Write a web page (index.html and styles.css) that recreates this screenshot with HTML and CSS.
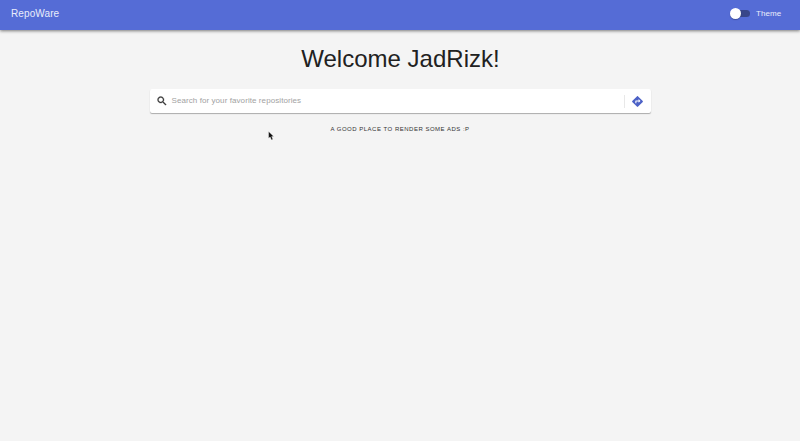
FILE: index.html
```html
<!DOCTYPE html>
<html lang="en">
<head>
<meta charset="utf-8">
<title>RepoWare</title>
<link rel="stylesheet" href="styles.css">
</head>
<body>
<header class="appbar">
  <span class="brand">RepoWare</span>
  <label class="theme"><span class="switch"><span class="thumb"></span></span><span class="theme-label">Theme</span></label>
</header>
<main class="content">
  <h1 class="title">Welcome JadRizk!</h1>
  <form class="search">
    <svg class="search-icon" viewBox="0 0 24 24"><path d="M15.5 14h-.79l-.28-.27C15.41 12.59 16 11.11 16 9.500 16 5.910 13.090 3 9.500 3S3 5.910 3 9.500 5.910 16 9.500 16c1.610 0 3.090-.59 4.230-1.570l.27.28v.79l5 4.990L20.490 19l-4.990-5zm-6 0C7.010 14 5 11.990 5 9.500S7.010 5 9.500 5 14 7.010 14 9.500 11.990 14 9.500 14z"/></svg>
    <span class="placeholder">Search for your favorite repositories</span>
    <span class="divider"></span>
    <svg class="go-icon" viewBox="0 0 24 24"><path d="M21.710 11.290l-9-9c-.39-.39-1.020-.39-1.410 0l-9 9c-.39.39-.39 1.020 0 1.410l9 9c.39.39 1.020.39 1.410 0l9-9c.39-.38.39-1.010 0-1.410zM14 14.500V12h-4v3H8v-4c0-.55.45-1 1-1h5V7.500l3.500 3.500-3.500 3.500z"/></svg>
  </form>
  <p class="ads">A GOOD PLACE TO RENDER SOME ADS :P</p>
</main>
<svg class="cursor" viewBox="0 0 8 12"><path d="M.5.500v8.200l1.900-1.500 1.600 3.600 1.700-.8-1.500-3.300h2.500z"/></svg>
</body>
</html>
```
FILE: styles.css
```css
* { box-sizing: border-box; }
body {
  margin: 0;
  min-height: 441px;
  background: #f4f4f4;
  color: #212121;
  font-family: "Liberation Sans", Arial, sans-serif;
}
.appbar {
  display: flex;
  align-items: center;
  justify-content: space-between;
  height: 30px;
  padding: 0 19px 3px 11px;
  background: #556cd6;
  color: #e9ecfb;
  box-shadow: 0 1px 3px rgba(0, 0, 0, .5);
}
.brand { font-size: 10px; line-height: 14px; letter-spacing: .1px; }
.theme { display: flex; align-items: center; gap: 6px; }
.switch {
  display: flex;
  align-items: center;
  width: 17px;
  height: 7px;
  border-radius: 4px;
  background: #384689;
}
.thumb {
  flex: none;
  width: 11px;
  height: 11px;
  margin-left: -3px;
  border-radius: 50%;
  background: #fff;
  box-shadow: 0 1px 1px rgba(0, 0, 0, .25);
}
.theme-label { width: 25px; font-size: 8px; line-height: 12px; letter-spacing: .05px; }
.content { display: flex; flex-direction: column; align-items: center; padding-top: 15px; }
.title { margin: 0; padding-left: 1px; font-size: 24px; line-height: 28px; font-weight: 400; letter-spacing: .02px; white-space: nowrap; }
.search {
  display: flex;
  align-items: center;
  width: 501px;
  height: 24px;
  margin: 16px 0 0;
  padding: 0 7px 0 6px;
  border-radius: 2px;
  background: #fff;
  box-shadow: 0 1px 1px rgba(0, 0, 0, .3);
}
.search-icon { width: 12px; height: 12px; fill: #333; stroke: #333; stroke-width: .6; }
.placeholder { flex: 1; margin-left: 4px; font-size: 8px; line-height: 12px; letter-spacing: .08px; color: #a2a2a2; white-space: nowrap; }
.divider { width: 1px; height: 13px; margin-right: 6px; background: #e8e8e8; }
.go-icon { width: 13px; height: 13px; fill: #4c61c6; }
.ads { margin: 11px 0 0; font-size: 6px; line-height: 10px; letter-spacing: .5px; color: #333; white-space: nowrap; }
.cursor { position: absolute; left: 268px; top: 131px; width: 7px; height: 10px; fill: #111; stroke: #fff; stroke-width: .4; }
```
